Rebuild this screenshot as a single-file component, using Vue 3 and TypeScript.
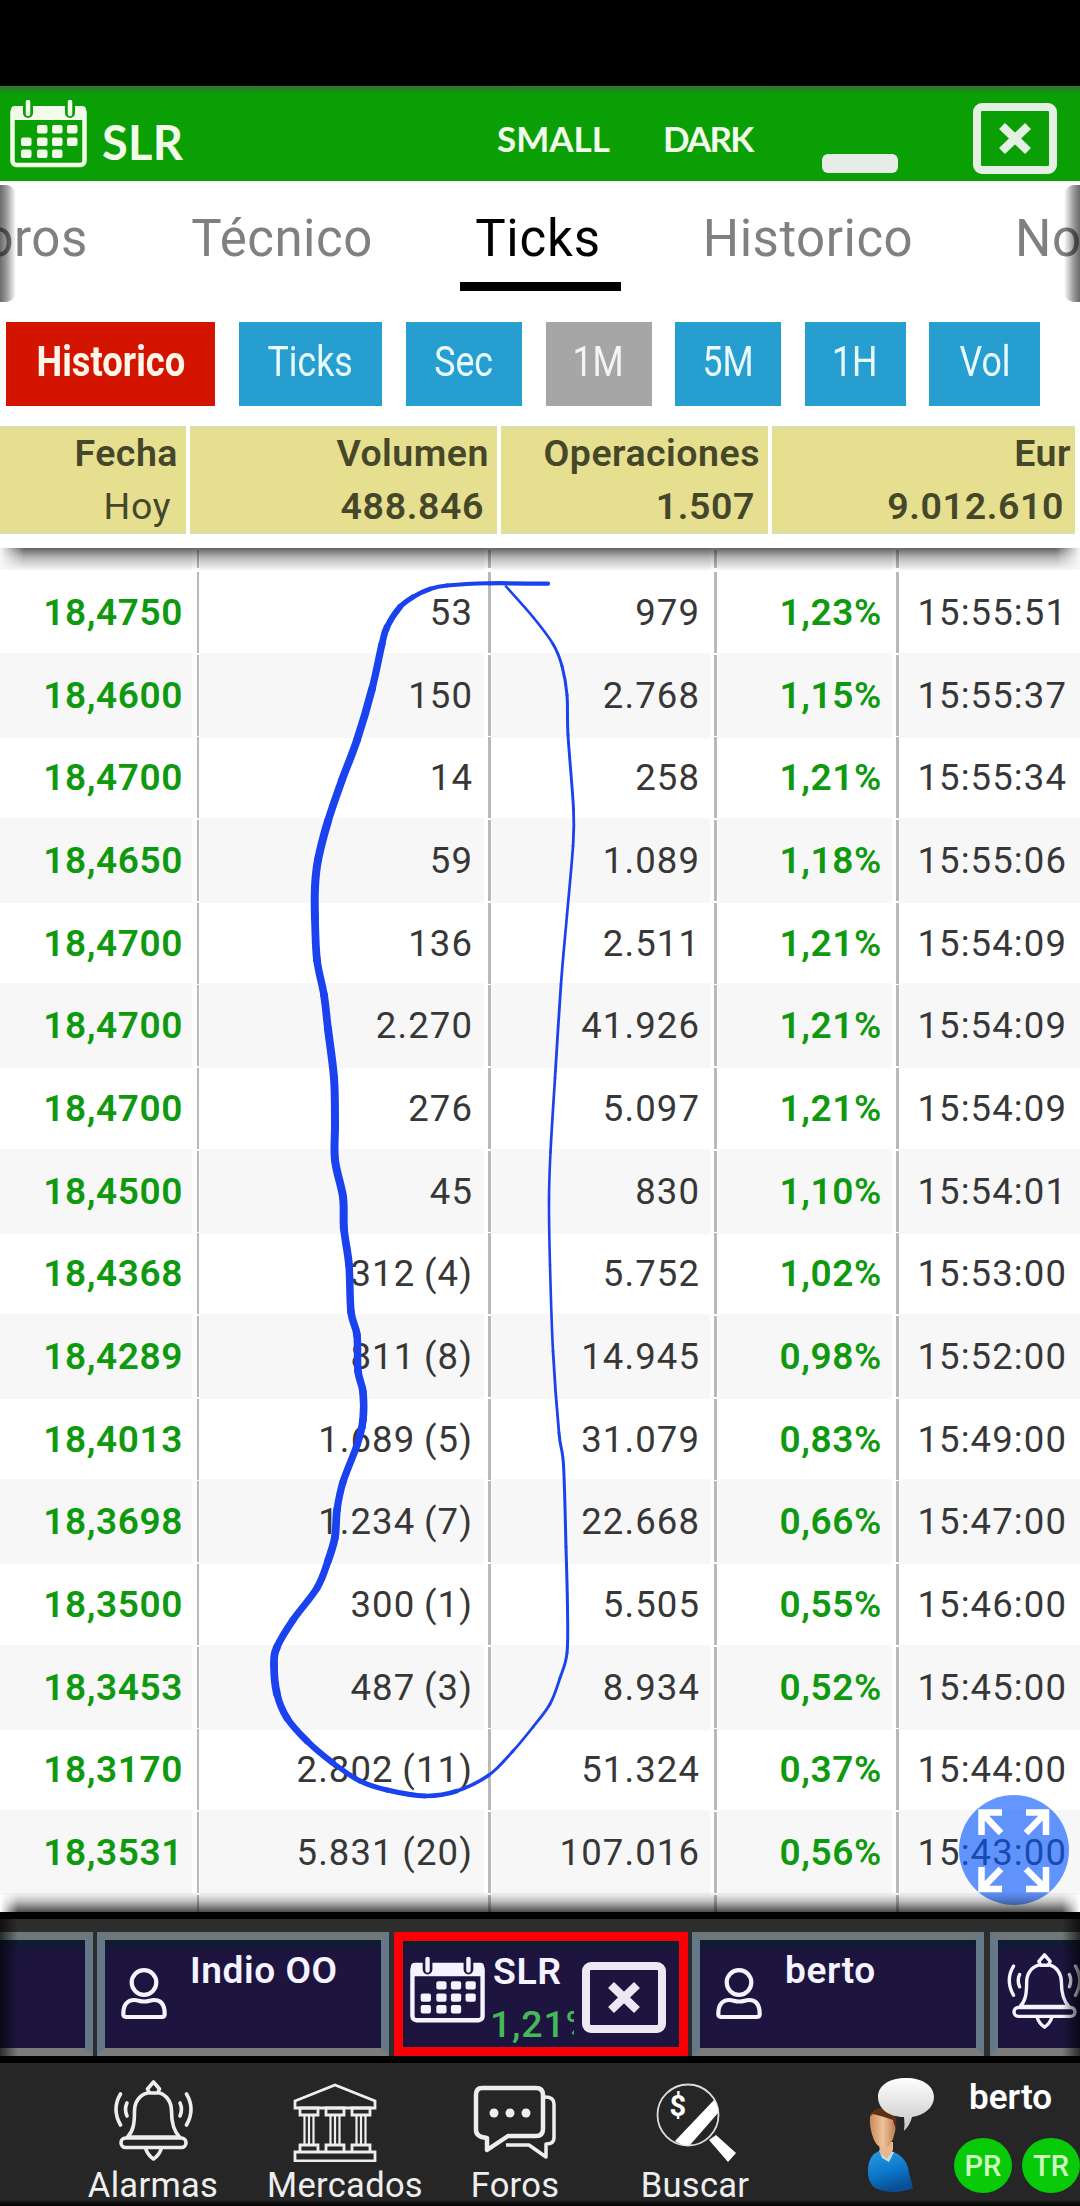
<script setup lang="ts">
type Row = [price: string, volume: string, amount: string, change: string, time: string]

const rows: Row[] = [
  ['18,4750', '53', '979', '1,23%', '15:55:51'],
  ['18,4600', '150', '2.768', '1,15%', '15:55:37'],
  ['18,4700', '14', '258', '1,21%', '15:55:34'],
  ['18,4650', '59', '1.089', '1,18%', '15:55:06'],
  ['18,4700', '136', '2.511', '1,21%', '15:54:09'],
  ['18,4700', '2.270', '41.926', '1,21%', '15:54:09'],
  ['18,4700', '276', '5.097', '1,21%', '15:54:09'],
  ['18,4500', '45', '830', '1,10%', '15:54:01'],
  ['18,4368', '312 (4)', '5.752', '1,02%', '15:53:00'],
  ['18,4289', '811 (8)', '14.945', '0,98%', '15:52:00'],
  ['18,4013', '1.689 (5)', '31.079', '0,83%', '15:49:00'],
  ['18,3698', '1.234 (7)', '22.668', '0,66%', '15:47:00'],
  ['18,3500', '300 (1)', '5.505', '0,55%', '15:46:00'],
  ['18,3453', '487 (3)', '8.934', '0,52%', '15:45:00'],
  ['18,3170', '2.802 (11)', '51.324', '0,37%', '15:44:00'],
  ['18,3531', '5.831 (20)', '107.016', '0,56%', '15:43:00'],
]

const tabs = [
  { label: 'Foros', width: 240 },
  { label: 'Técnico', width: 280 },
  { label: 'Ticks', width: 236, active: true },
  { label: 'Historico', width: 300 },
  { label: 'Noticias', width: 310 },
]

const filters = [
  { label: 'Historico', width: 209, kind: 'red' },
  { label: 'Ticks', width: 143.5, kind: 'blue' },
  { label: 'Sec', width: 116.5, kind: 'blue' },
  { label: '1M', width: 106, kind: 'grey' },
  { label: '5M', width: 106, kind: 'blue' },
  { label: '1H', width: 101, kind: 'blue' },
  { label: 'Vol', width: 111, kind: 'blue' },
]

const calendarDots: [number, number][] = [
  [27, 25], [42, 25], [57, 25],
  [11, 37.5], [27, 37.5], [42, 37.5], [57, 37.5],
  [11, 49.5], [27, 49.5], [42, 49.5],
]

// Freehand pen stroke: x, y, pen width
const pen: [number, number, number][] = [
  [548, 583.7, 4.5], [489, 583.3, 4], [447, 585.5, 4], [430, 589, 4.5], [413, 597, 5], [400, 607, 5.5],
  [387, 627, 6.5], [382, 644, 7], [372, 689, 7.5], [357, 740, 8], [342, 780, 7.5], [328, 821, 8],
  [318, 860, 8], [315, 887, 8], [315, 919, 8], [317, 960, 7.5], [324, 995, 7.5], [328, 1029, 8],
  [334, 1078, 8], [335, 1123, 8], [335, 1160, 8], [343, 1197, 8], [344, 1229, 8], [349, 1265, 7.5],
  [351, 1312, 7.5], [357, 1335, 7.5], [358, 1371, 7.5], [363, 1392, 7.5], [363, 1420, 7.5], [357, 1445, 7.5],
  [343, 1482, 7], [337, 1510, 7.5], [335, 1537, 8], [328, 1561, 7.5], [317, 1588, 7], [293, 1620, 7],
  [277, 1647, 7.5], [274, 1665, 8], [277, 1694, 7.5], [287, 1718, 7], [307, 1741, 6.5], [333, 1763, 5.5],
  [360, 1781, 5], [387, 1790, 5], [425, 1796, 5], [457, 1791, 4], [489, 1775, 3], [513, 1751, 2.8],
  [533, 1727, 2.8], [550, 1704, 2.8], [560, 1678, 2.8], [567, 1653, 3], [567.5, 1608, 3], [566, 1547, 3],
  [563.5, 1465, 3], [559, 1433, 3], [553, 1351, 2.6], [550, 1265, 2.6], [549, 1200, 2.6], [550.5, 1152, 2.6],
  [555, 1078, 2.8], [561, 984, 2.8], [567, 915, 2.6], [573, 846, 2.8], [573.5, 809, 2.8], [568, 735, 3],
  [567, 695, 3], [562, 666, 3], [553, 644, 2.8], [533, 617, 2.6], [506, 586.5, 2.6],
]

const n1 = (v: number) => v.toFixed(2)
const strokes = pen.slice(0, -1).map((p, i) => {
  const q = pen[i + 1]
  const a = pen[Math.max(0, i - 1)]
  const b = pen[Math.min(pen.length - 1, i + 2)]
  const c1 = [p[0] + (q[0] - a[0]) / 6, p[1] + (q[1] - a[1]) / 6]
  const c2 = [q[0] - (b[0] - p[0]) / 6, q[1] - (b[1] - p[1]) / 6]
  return {
    d: `M${p[0]} ${p[1]}C${n1(c1[0])} ${n1(c1[1])} ${n1(c2[0])} ${n1(c2[1])} ${q[0]} ${q[1]}`,
    w: (p[2] + q[2]) / 2,
  }
})
</script>

<template>
  <div class="screen">
    <svg class="defs" width="0" height="0">
      <symbol id="calendar" viewBox="0 0 78 68">
        <rect x="2.5" y="9" width="72" height="56" rx="4" fill="none" stroke="currentColor" stroke-width="4.5" />
        <path d="M1 10q0-4 4-4h67q4 0 4 4v10H1z" fill="currentColor" />
        <path d="M18 1v12M60 1v12" stroke="var(--ring)" stroke-width="10" stroke-linecap="round" />
        <path d="M18 2v12M60 2v12" stroke="currentColor" stroke-width="4.5" stroke-linecap="round" />
        <rect v-for="(d, i) in calendarDots" :key="i" :x="d[0]" :y="d[1]" width="10.5" height="8.5" rx="2" fill="currentColor" />
      </symbol>
      <symbol id="close" viewBox="0 0 84 71">
        <rect x="4" y="4" width="76" height="63" rx="5" fill="none" stroke="currentColor" stroke-width="8" />
        <path d="M29 23l26 25M55 23L29 48" stroke="currentColor" stroke-width="8.5" />
      </symbol>
      <symbol id="bell" viewBox="0 0 80 82">
        <g fill="none" stroke="currentColor" stroke-width="3.6" stroke-linejoin="round" stroke-linecap="round">
          <path d="M40 2l6 7-2 4h-8l-2-4z" />
          <path d="M34 13C26 15 21 22 21 31c0 12-1 20-7 26h52c-6-6-8-14-8-26 0-9-5-16-12-18" />
          <rect x="7.500" y="58" width="65" height="9.500" rx="4.700" />
          <path d="M32 68q2 7 8 11 6-4 8-11" />
          <path d="M7 14q-9 15 0 31M73 14q9 15 0 31" />
          <path d="M13.500 23q-3 6 0 13M66.500 23q3 6 0 13" />
        </g>
      </symbol>
      <symbol id="person" viewBox="0 0 46 52">
        <g fill="none" stroke="currentColor" stroke-width="4.200" stroke-linejoin="round">
          <circle cx="23" cy="14.500" r="12.300" />
          <path d="M2.300 46c0-9 4-14 11-14 4 0 5 1.500 10 1.500S29 32 33 32c7 0 10.700 5 10.700 14 0 2-1 3-3 3H5c-2 0-2.700-1-2.700-3z" />
        </g>
      </symbol>
    </svg>

    <div class="status"></div>

    <header class="titlebar">
      <svg class="tb-cal"><use href="#calendar" /></svg>
      <span class="tb-name">SLR</span>
      <span class="tb-small">SMALL</span>
      <span class="tb-dark">DARK</span>
      <i class="tb-min"></i>
      <svg class="tb-close"><use href="#close" /></svg>
    </header>

    <section class="sheet">
      <nav class="tabs">
        <div v-for="t in tabs" :key="t.label" class="tab" :class="{ active: t.active }" :style="{ width: t.width + 'px' }">
          <span>{{ t.label }}</span>
        </div>
      </nav>
      <div class="filters">
        <button v-for="f in filters" :key="f.label" :class="f.kind" :style="{ width: f.width + 'px' }">
          <span>{{ f.label }}</span>
        </button>
      </div>
      <div class="summary">
        <div><b>Fecha</b><em class="plain">Hoy</em></div>
        <div><b>Volumen</b><em>488.846</em></div>
        <div><b>Operaciones</b><em>1.507</em></div>
        <div><b>Eur</b><em>9.012.610</em></div>
      </div>
    </section>

    <main class="table">
      <div class="row odd stub"><span v-for="c in 5" :key="c" class="cell"></span></div>
      <div v-for="(r, i) in rows" :key="i" class="row" :class="{ odd: i % 2 === 1 }">
        <span v-for="(c, j) in r" :key="j" class="cell" :class="{ up: j === 0 || j === 3 }">{{ c }}</span>
      </div>
      <div class="row"><span v-for="c in 5" :key="c" class="cell"></span></div>
      <div class="shade top"></div>
      <button class="fab">
        <svg viewBox="0 0 110 110" fill="none" stroke="#fff" stroke-width="6.500">
          <path d="M43 17.500H22.500V40M22.500 17.500L42 38" />
          <path d="M67 17.500H87V40M87 17.500L67 38" />
          <path d="M43 94H22.500V72M22.500 94L42 74" />
          <path d="M67 94H87V72M87 94L67 74" />
        </svg>
      </button>
      <div class="shade bottom"></div>
    </main>

    <div class="tasks">
      <div class="task first"></div>
      <div class="task">
        <svg class="who"><use href="#person" /></svg>
        <span class="task-name">Indio OO</span>
      </div>
      <div class="task current">
        <svg class="task-cal"><use href="#calendar" /></svg>
        <div class="quote"><span>SLR</span><span class="pct">1,21%</span></div>
        <svg class="task-close"><use href="#close" /></svg>
      </div>
      <div class="task">
        <svg class="who"><use href="#person" /></svg>
        <span class="task-name">berto</span>
      </div>
      <div class="task last">
        <svg class="task-bell"><use href="#bell" /></svg>
      </div>
    </div>

    <footer class="bottom">
      <div class="item alarmas">
        <svg width="81" height="82"><use href="#bell" /></svg>
        <span>Alarmas</span>
      </div>
      <div class="item mercados">
        <svg width="84" height="82" viewBox="0 0 84 82" fill="none" stroke="currentColor" stroke-width="2.800">
          <path d="M2 21L42 5l40 16v7H2z" />
          <path d="M7 28h18v7H7zM33 28h18v7H33zM59 28h18v7H59z" />
          <path d="M11.500 35v30M20.500 35v30M16 35v30M37.500 35v30M46.500 35v30M42 35v30M63.500 35v30M72.500 35v30M68 35v30" stroke-width="2.200" />
          <path d="M7 65h18v7H7zM33 65h18v7H33zM59 65h18v7H59zM2 72h80v9H2z" />
        </svg>
        <span>Mercados</span>
      </div>
      <div class="item foros">
        <svg width="84" height="82" viewBox="0 0 84 82" fill="none" stroke="currentColor" stroke-width="4.500" stroke-linejoin="round">
          <path d="M9 8h54q7 0 7 7v34q0 7-7 7H35L14 70V58Q3 57 3 50V15q0-7 6-7z" />
          <path d="M72 17q9 0 9 7v34q0 6-8 6v13L56 65H33" stroke-width="3.500" />
          <g fill="currentColor" stroke="none">
            <circle cx="21" cy="33" r="4.500" /><circle cx="37" cy="33" r="4.500" /><circle cx="53" cy="33" r="4.500" />
          </g>
        </svg>
        <span>Foros</span>
      </div>
      <div class="item buscar">
        <svg width="84" height="82" viewBox="0 0 84 82">
          <circle cx="35" cy="35" r="30.500" fill="none" stroke="#ddd" stroke-width="1.800" />
          <path d="M22 61L61 20q4 5 4 13L37 65q-9 1-15-4z" fill="#fff" />
          <path d="M56 60l7-5 20 18-8 9z" fill="#fff" />
          <text x="25" y="36" text-anchor="middle" font-family="Roboto, sans-serif" font-size="29" font-weight="700" fill="#fff">$</text>
        </svg>
        <span>Buscar</span>
      </div>
      <svg class="avatar" viewBox="0 0 70 120">
        <defs>
          <linearGradient id="bubble" x1="0" y1="0" x2="0" y2="1"><stop offset="0" stop-color="#fff" /><stop offset="1" stop-color="#c6c6c6" /></linearGradient>
          <linearGradient id="shirt" x1="0" y1="0" x2=".3" y2="1"><stop offset="0" stop-color="#2f9be4" /><stop offset=".6" stop-color="#0b76c8" /><stop offset="1" stop-color="#0a4f96" /></linearGradient>
          <linearGradient id="skin" x1="0" y1="0" x2="1" y2="0"><stop offset="0" stop-color="#c98a55" /><stop offset=".5" stop-color="#efc39c" /><stop offset="1" stop-color="#b9794a" /></linearGradient>
        </defs>
        <path d="M7 92q1-13 11-17l12 0q16 5 18 22l4 15q-20 8-38 0Q6 106 7 92z" fill="url(#shirt)" />
        <path d="M18 74l3 8 7 4 5-10z" fill="#bfe0ee" />
        <path d="M18 66h14v8l-6 9-7-6z" fill="#e8b78f" />
        <path d="M9 40q3-7 12-7 13 1 14 13 0 9-3 17-5 10-9 9-6 0-10-8-5-12-4-24z" fill="url(#skin)" />
        <path d="M9 42q2-11 13-10 16 2 13 20-2-2-3-8-8-3-20-6-2 1-3 4z" fill="#5b3015" />
        <path d="M44 2c17 0 28 8 28 19 0 10-9 18-22 20q-2 8-8 14 1-7 0-14C26 41 16 32 16 21 16 9 28 2 44 2z" transform="translate(1)" fill="url(#bubble)" />
      </svg>
      <div class="user">
        <b>berto</b>
        <div class="badges"><i>PR</i><i>TR</i></div>
      </div>
    </footer>

    <svg class="ink" viewBox="0 0 1080 2206" width="1080" height="2206">
      <path v-for="(s, i) in strokes" :key="i" :d="s.d" :stroke-width="s.w" />
    </svg>
  </div>
</template>

<style>
body { margin: 0; background: #000; }
</style>

<style scoped>
* { box-sizing: border-box; }
.screen { position: relative; width: 1080px; height: 2206px; overflow: hidden; display: flex; flex-direction: column; background: #000; font-family: Roboto, sans-serif; }
.defs { position: absolute; }
.status { flex: none; height: 86px; background: #000; }
button { border: 0; padding: 0; font-family: inherit; }

.titlebar { flex: none; height: 95px; display: flex; align-items: flex-start; background: linear-gradient(#2a7d25 0, #2a7d25 4px, #0aa005 7px); color: #f2fbe9; font-family: Lato, sans-serif; font-weight: 700; padding-left: 10px; --ring: #0aa005; }
.tb-cal { width: 78px; height: 68px; margin-top: 14px; }
.tb-name { margin: 26px 0 0 14px; width: 395px; font-size: 47px; line-height: 60px; letter-spacing: .3px; }
.tb-small { margin-top: 31px; width: 166px; font-size: 35px; line-height: 42px; }
.tb-dark { margin-top: 31px; width: 159px; font-size: 35px; line-height: 42px; letter-spacing: -1.800px; }
.tb-min { width: 76px; height: 19px; margin-top: 68px; border-radius: 6px; background: #e6ece8; }
.tb-close { width: 84px; height: 71px; margin: 17px 0 0 75px; color: #e4f0e4; }

.sheet { flex: none; height: 367px; background: #fff; overflow: hidden; }
.tabs { position: relative; height: 124px; width: 1080px; overflow: hidden; display: flex; }
.tabs::before, .tabs::after { content: ''; position: absolute; top: 4px; height: 117px; width: 16px; z-index: 2; }
.tabs::before { left: 0; background: linear-gradient(90deg, rgba(0,0,0,.58), rgba(0,0,0,.4) 40%, transparent); border-radius: 0 10px 10px 0; }
.tabs::after { right: 0; background: linear-gradient(270deg, rgba(0,0,0,.58), rgba(0,0,0,.4) 40%, transparent); border-radius: 10px 0 0 10px; }
.tab { flex: none; display: flex; justify-content: center; color: #808080; font-size: 51px; }
.tab:first-child { margin-left: -98px; }
.tab span { display: block; height: 110px; line-height: 116px; text-align: center; letter-spacing: .5px; }
.tab.active { color: #000; }
.tab.active span { width: 161px; border-bottom: 9px solid #000; padding-right: 4px; letter-spacing: .8px; }
.tab:last-child { justify-content: flex-start; padding-left: 57px; }

.filters { height: 121px; display: flex; align-items: flex-start; gap: 23.500px; padding: 17px 0 0 6px; }
.filters button { flex: none; height: 83.500px; color: #e9fbff; font-size: 42px; display: flex; justify-content: center; white-space: nowrap; }
.filters span { line-height: 80px; transform: scaleX(.85); }
.filters .blue { background: #269fd0; }
.filters .grey { background: #a6a6a6; color: #f4f4f4; }
.filters .red { background: #d31500; color: #fff6ea; font-weight: 700; }
.filters .red span { transform: scaleX(.865); }

.summary { height: 108px; width: 1075px; display: grid; grid-template-rows: 108px; grid-template-columns: 186px 307px 267px 303px; gap: 4px; color: #45472a; }
.summary div { background: #e6df8f; border-top: 3px solid #dbe0a6; border-bottom: 3px solid #dbe0a6; display: flex; flex-direction: column; align-items: flex-end; font-size: 37.500px; letter-spacing: .5px; }
.summary b, .summary em { flex: none; font-style: normal; font-weight: 600; line-height: 53px; height: 53px; }
.summary b { padding-right: 8px; margin-top: -2px; }
.summary em { padding-right: 13px; letter-spacing: .6px; }
.summary div:last-child b { padding-right: 4px; }
.summary div:last-child em { padding-right: 11px; }
.summary em.plain { font-weight: 400; padding-right: 15px; }

.table { position: relative; flex: none; height: 1364px; background: #fff; display: flex; flex-direction: column; overflow: hidden; }
.row { flex: none; height: 82.670px; display: grid; grid-template-columns: 200px 292px 226px 182px 180px; }
.row.stub { height: 22px; }
.cell { position: relative; margin-right: 8px; text-align: right; white-space: nowrap; font-size: 36.500px; line-height: 85px; letter-spacing: 1.100px; word-spacing: -1.500px; color: #373737; }
.cell:last-child { margin-right: 0; }
.odd .cell { background: #f7f7f7; }
.cell:not(:last-child)::after { content: ''; position: absolute; right: -7px; top: 2px; bottom: 2px; width: 3px; background: #b9b9b9; }
.cell:nth-child(1)::after { width: 2px !important; }
.cell:nth-child(1) { padding-right: 9px; }
.cell:nth-child(2) { padding-right: 11px; }
.cell:nth-child(3) { padding-right: 10px; }
.cell:nth-child(4) { padding-right: 10px; }
.cell:nth-child(5) { padding-right: 13px; }
.cell.up { color: #0f990f; font-weight: 600; font-size: 37px; letter-spacing: .6px; }
.shade { position: absolute; left: 0; right: 0; pointer-events: none; }
.shade.top { top: 0; height: 22px; background: linear-gradient(rgba(0,0,0,.6), rgba(0,0,0,.25) 45%, transparent); -webkit-mask-image: linear-gradient(90deg, transparent, #000 24px, #000 1056px, transparent); }
.shade.bottom { bottom: 0; height: 20px; background: linear-gradient(transparent, rgba(0,0,0,.28) 50%, rgba(0,0,0,.7)); -webkit-mask-image: linear-gradient(90deg, transparent, #000 18px, #000 1062px, transparent); }
.fab { position: absolute; left: 959px; top: 1247px; width: 110px; height: 110px; border-radius: 50%; background: rgba(5, 85, 255, .62); }
.fab svg { display: block; width: 110px; height: 110px; }

.tasks { position: relative; flex: none; height: 151px; border-top: 7px solid #000; border-bottom: 7px solid #000; background: #2d2d2d; display: flex; gap: 4px; padding-top: 13px; overflow: hidden; color: #f5f3ff; --ring: #1e1540; }
.tasks::before, .tasks::after { content: ''; position: absolute; top: 0; bottom: 0; width: 18px; z-index: 1; }
.tasks::before { left: 0; background: linear-gradient(90deg, rgba(0,0,0,.65), transparent); }
.tasks::after { right: 0; background: linear-gradient(270deg, rgba(0,0,0,.65), transparent); }
.task { flex: none; width: 292px; height: 124px; border: 8px solid; border-color: #6f777a #647887 #7b7b7b #647887; background: #1d1540; box-shadow: inset 0 9px 8px -4px #0b202c; display: flex; align-items: flex-start; }
.task.first { width: 93px; border-left: 0; }
.task.current { width: 294px; border: 9px solid #f80006; margin-left: 1px; }
.task.last { border-right: 0; width: 110px; margin-left: 2px; }
.who { flex: none; width: 46px; height: 52px; margin: 28px 0 0 16px; }
.task-name { margin: 9px 0 0 23px; font-size: 37px; line-height: 44px; font-weight: 600; letter-spacing: .6px; }
.task-cal { flex: none; width: 76px; height: 68px; margin: 15px 0 0 7px; }
.quote { width: 84px; margin: 8px 8px 0 4px; overflow: hidden; display: flex; flex-direction: column; font-size: 37.500px; font-weight: 600; line-height: 44px; white-space: nowrap; letter-spacing: .5px; }
.quote span:first-child { padding-left: 3px; }
.pct { color: #45b958; margin-top: 9px; font-weight: 500; letter-spacing: .8px; }
.task-close { flex: none; width: 84px; height: 71px; margin-top: 21px; color: #ebe8f4; }
.task-bell { flex: none; width: 79px; height: 77px; margin: 13px 0 0 7px; }

.bottom { flex: none; height: 143px; background: linear-gradient(#262626 137px, #141414 139px, #000); display: flex; color: #eee; }
.item { flex: none; display: flex; flex-direction: column; align-items: center; font-size: 34.500px; letter-spacing: .3px; }
.item svg { flex: none; margin-top: 17px; display: block; }
.item span { flex: none; line-height: 40px; margin-top: 3px; height: 40px; }
.alarmas { width: 160px; margin-left: 73px; }
.mercados { width: 204px; }
.mercados span { padding-left: 20px; }
.foros { width: 156px; }
.buscar { width: 204px; }
.avatar { width: 70px; height: 120px; margin: 13px 0 0 64px; overflow: visible; }
.user { margin-left: 23px; width: 126px; }
.user b { display: block; margin: 14px 0 0 15px; font-size: 35px; line-height: 42px; font-weight: 600; color: #fff; }
.badges { display: flex; gap: 10px; margin-top: 19px; }
.badges i { flex: none; width: 58px; height: 55px; border-radius: 50%; background: #08ca08; color: #cdf9c0; font: 500 29px/57px Roboto, sans-serif; text-align: center; }

.ink { position: absolute; left: 0; top: 0; pointer-events: none; fill: none; stroke: #1a42ee; stroke-linecap: round; }
</style>
